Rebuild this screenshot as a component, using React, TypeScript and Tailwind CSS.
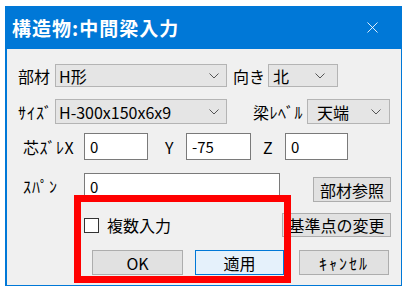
import { X } from 'lucide-react';

const Chevron = () => (
  <svg width="10" height="6" viewBox="0 0 10 6" className="shrink-0">
    <polyline points="0.5,0.5 5,5 9.5,0.5" fill="none" stroke="#555555" strokeWidth="1" />
  </svg>
);

const Combo = ({ value, className }: { value: string; className: string }) => (
  <div className={`flex items-center justify-between border border-[#b4b4b4] bg-[#e5e5e5] ${className}`}>
    <span className="whitespace-nowrap">{value}</span>
    <Chevron />
  </div>
);

const TextBox = ({ value, className }: { value: string; className: string }) => (
  <div className={`flex items-center border border-[#7a7a7a] bg-white pl-[5px] text-[15px] ${className}`}>{value}</div>
);

const Btn = ({ label, className }: { label: string; className: string }) => (
  <div className={`flex items-center justify-center border whitespace-nowrap ${className}`}>{label}</div>
);

export default function App() {
  return (
    <div className="relative w-[407px] h-[292px] bg-white overflow-hidden pt-[6px] pl-[5px] font-['Noto_Sans_CJK_JP','Noto_Sans',sans-serif] text-black">
      <div className="w-[397px] h-[280px] flex flex-col bg-[#f0f0f0] border-l-2 border-r border-b border-[#0078d7]">
        {/* Title bar */}
        <div className="h-[43px] shrink-0 bg-[#0078d7] flex items-center justify-between pl-[5px] pr-[19px] text-white">
          <span className="text-[19px] font-bold tracking-[1px] leading-none">構造物:中間梁入力</span>
          <X className="w-[19px] h-[19px]" strokeWidth={1.1} />
        </div>

        {/* Body */}
        <div className="flex flex-col text-[16px] leading-none">
          {/* 部材 / 向き */}
          <div className="flex items-center h-[23px] mt-[15px] pl-[11px]">
            <span className="w-[37px]">部材</span>
            <Combo value="H形" className="w-[172px] h-[23px] pl-[3px] pr-[7px]" />
            <span className="w-[35px] ml-[6px]">向き</span>
            <Combo value="北" className="w-[70px] h-[23px] pl-[4px] pr-[12px]" />
          </div>

          {/* サイズ / 梁レベル */}
          <div className="flex items-center h-[25px] mt-[12px] pl-[11px]">
            <span className="w-[37px] tracking-[1px]">ｻｲｽﾞ</span>
            <Combo value="H-300x150x6x9" className="w-[172px] h-[25px] pl-[3px] pr-[7px]" />
            <span className="w-[54px] ml-[26px] tracking-[0.5px]">梁ﾚﾍﾞﾙ</span>
            <Combo value="天端" className="w-[83px] h-[25px] pl-[9px] pr-[8px]" />
          </div>

          {/* 芯ズレ */}
          <div className="flex items-center h-[27px] mt-[9px] pl-[16px]">
            <span className="w-[61px] tracking-[0.5px]">芯ｽﾞﾚX</span>
            <TextBox value="0" className="w-[64px] h-[27px]" />
            <span className="w-[38px] pl-[17px]">Y</span>
            <TextBox value="-75" className="w-[65px] h-[27px]" />
            <span className="w-[34px] pl-[12px]">Z</span>
            <TextBox value="0" className="w-[63px] h-[27px]" />
          </div>

          {/* スパン */}
          <div className="flex items-start h-[29px] mt-[13px] pl-[16px]">
            <span className="w-[61px] h-[26px] flex items-center tracking-[1px]">ｽﾊﾟﾝ</span>
            <TextBox value="0" className="w-[196px] h-[26px]" />
            <Btn label="部材参照" className="w-[78px] h-[25px] mt-[4px] ml-[33px] bg-[#e1e1e1] border-[#adadad]" />
          </div>

          {/* 複数入力 */}
          <div className="flex items-center h-[24px] mt-[11px]">
            <div className="w-[15px] h-[15px] ml-[77px] border border-[#333333] bg-white" />
            <span className="ml-[8px]">複数入力</span>
            <Btn label="基準点の変更" className="w-[109px] h-[24px] ml-auto mr-[10px] bg-[#e1e1e1] border-[#adadad]" />
          </div>

          {/* OK / 適用 / キャンセル */}
          <div className="flex items-center h-[25px] mt-[13px]">
            <Btn label="OK" className="w-[91px] h-[25px] ml-[85px] bg-[#e1e1e1] border-[#adadad]" />
            <Btn label="適用" className="w-[89px] h-[25px] ml-[12px] bg-[#e5f1fb] border-[#0078d7]" />
            <Btn label="ｷｬﾝｾﾙ" className="w-[90px] h-[25px] ml-[15px] bg-[#e1e1e1] border-[#adadad] tracking-[2px]" />
          </div>
        </div>
      </div>

      {/* Red annotation */}
      <div className="absolute left-[74px] top-[195px] w-[217px] h-[88px] border-[7px] border-[#ff0000]" />
    </div>
  );
}
